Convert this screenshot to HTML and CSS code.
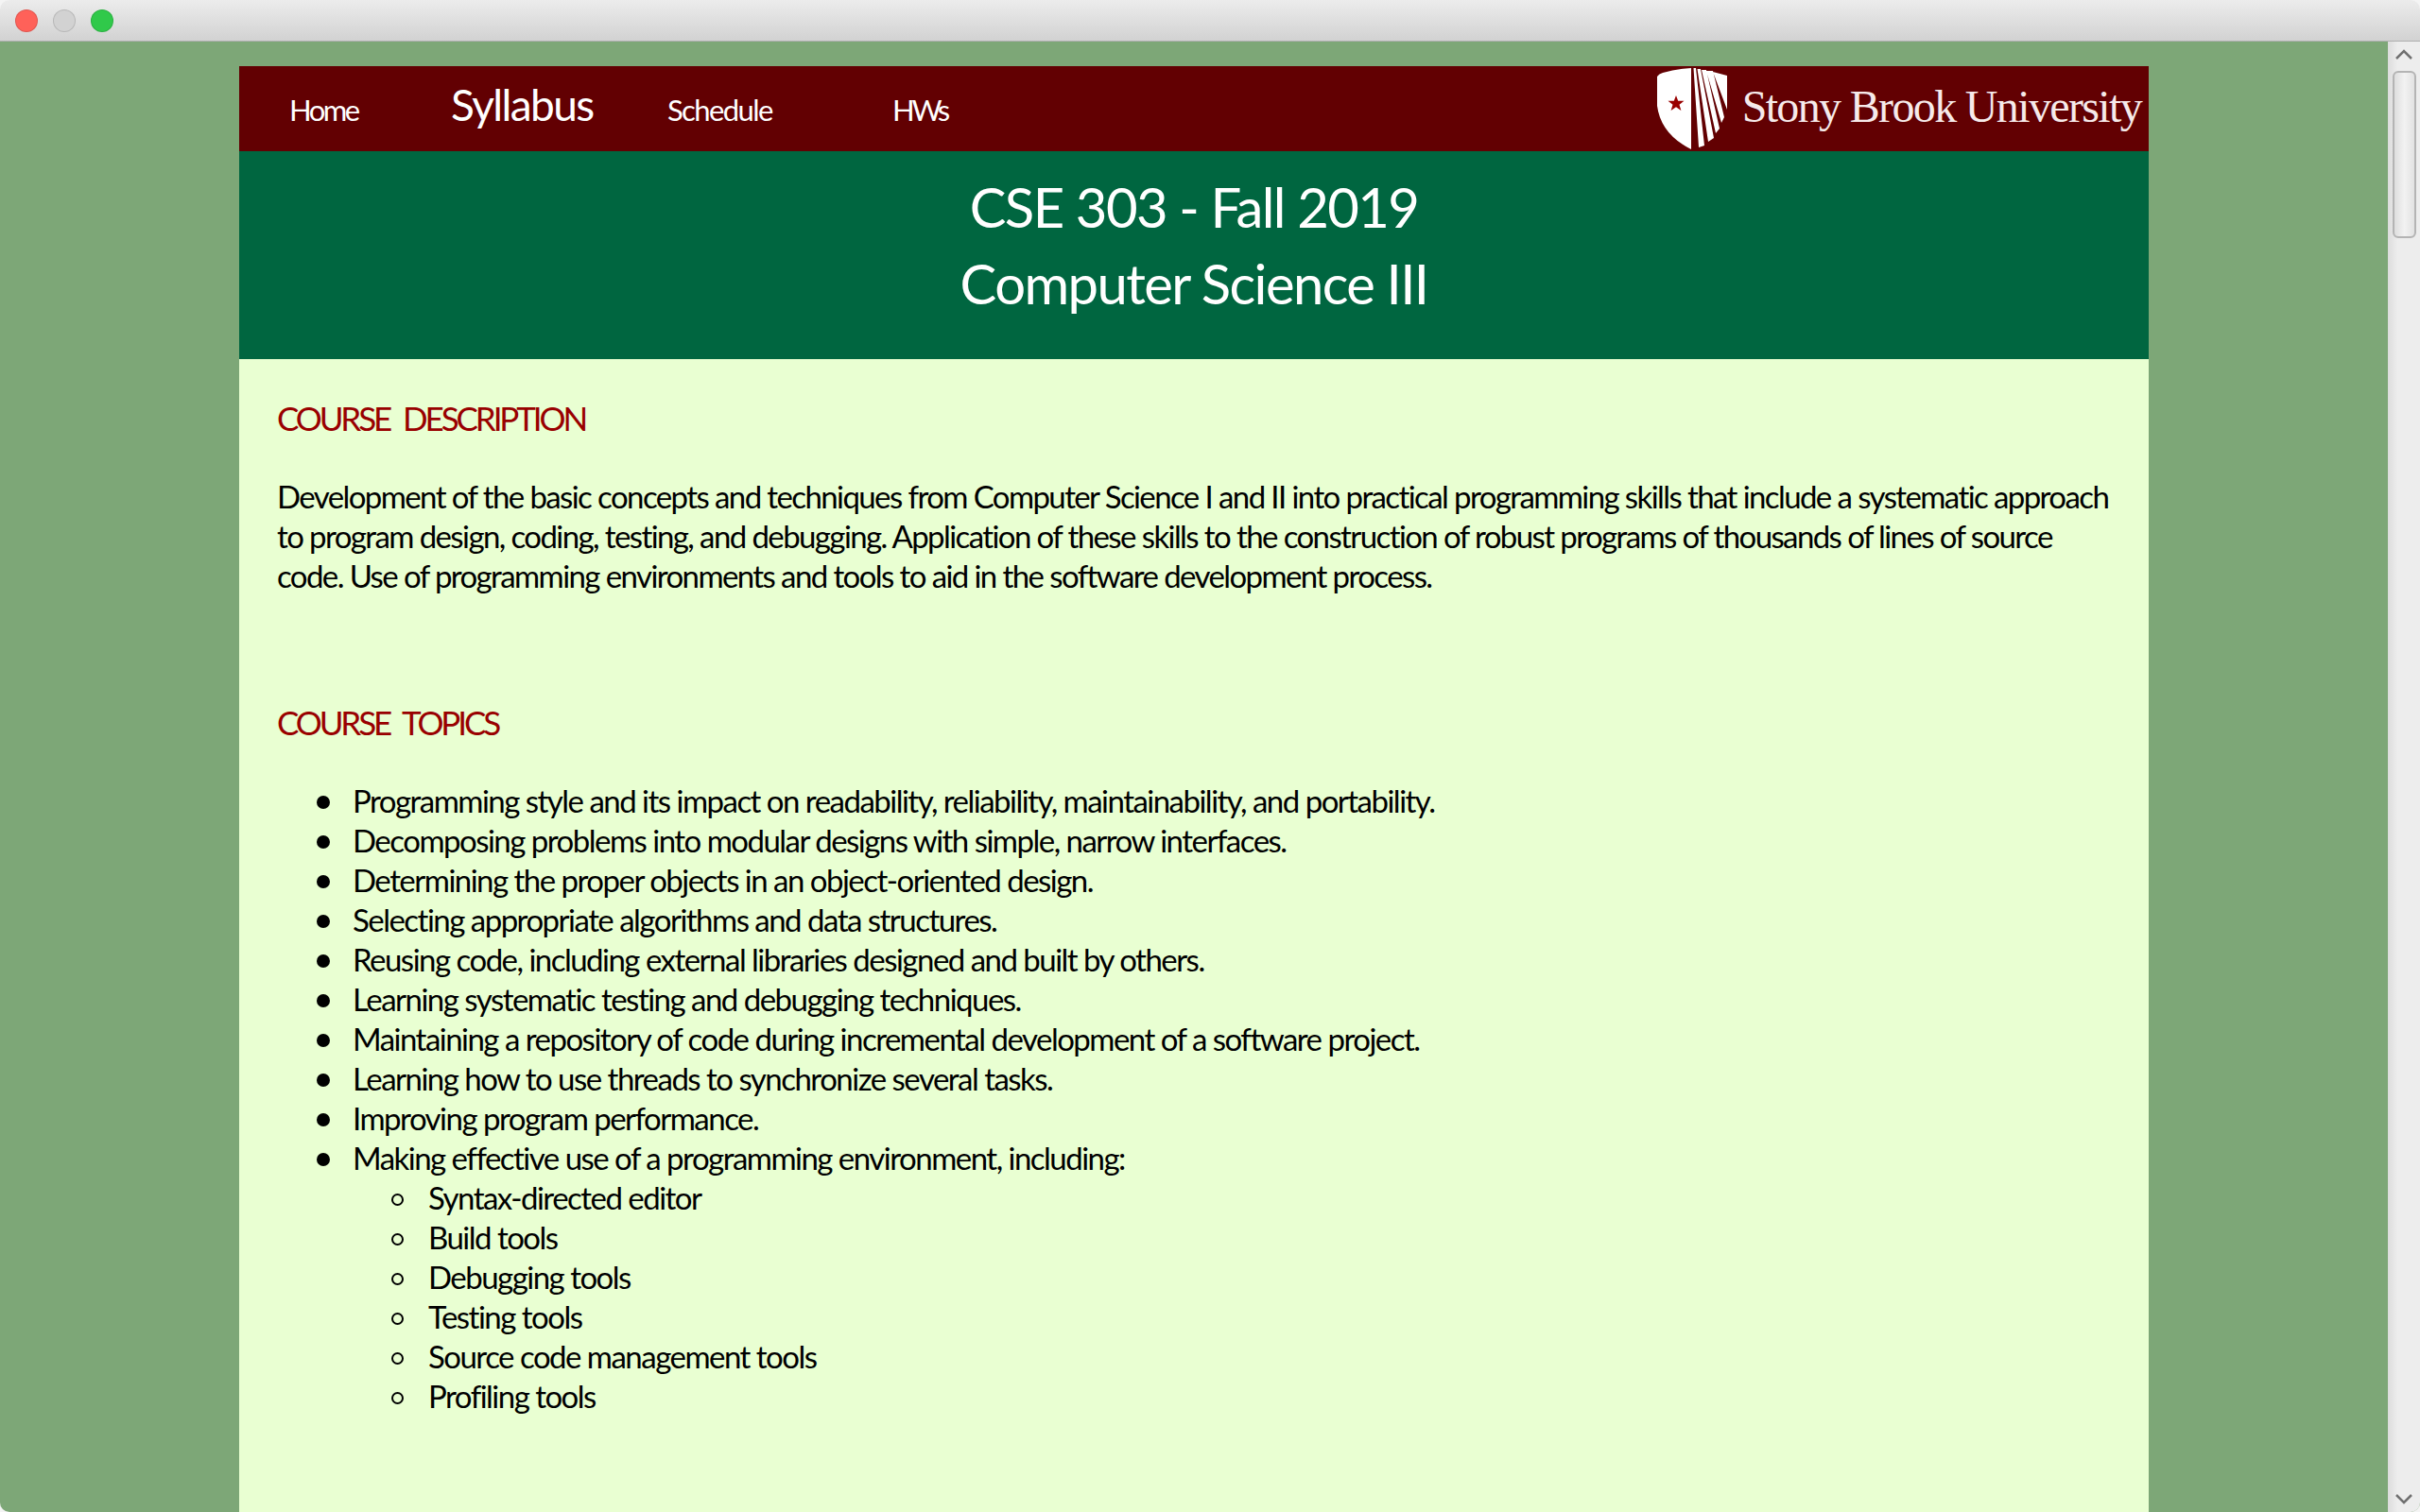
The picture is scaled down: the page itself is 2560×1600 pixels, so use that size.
FILE: index.html
```html
<!DOCTYPE html>
<html>
<head>
    <title>CSE 303 - Syllabus</title>
    <link rel="stylesheet" href="styles.css">
</head>
<body>
    <div class="titlebar">
        <span class="light red"></span>
        <span class="light grey"></span>
        <span class="light green"></span>
    </div>
    <div class="viewport">
        <div class="page">
            <div class="navbar">
                <a class="nav-link nav-home">Home</a>
                <a class="nav-link nav-syllabus">Syllabus</a>
                <a class="nav-link nav-schedule">Schedule</a>
                <a class="nav-link nav-hws">HWs</a>
                <div class="logo">
                    <svg class="shield" width="75" height="87" viewBox="0 0 75 87">
                        <path d="M0 9 Q2 6 6 5 Q20 1 36 0 L36 86 Q4 70 0 40 Z" fill="#fff"/>
                        <path d="M38.500 0 L41 0 L50 82 L44 84 Z M42.500 1 L46 1 L60 74 L54 78 Z M47 2 L52 2 L66 64 L62 69 Z M52 3 L59 3 L71 52 L68 58 Z M59 4 L74 8 L74 44 Z" fill="#fff"/>
                        <path d="M20 29 l2.200 5.800 6.300 0 -5 3.900 1.900 6.300 -5.400 -3.800 -5.400 3.800 1.900 -6.300 -5 -3.900 6.300 0 Z" fill="#990000"/>
                    </svg>
                    <span class="logo-text">Stony Brook University</span>
                </div>
            </div>
            <div class="banner">
                <div>CSE 303 - Fall 2019</div>
                <div>Computer Science III</div>
            </div>
            <div class="content">
                <h3>COURSE DESCRIPTION</h3>
                <p>Development of the basic concepts and techniques from Computer Science I and II into practical programming skills that include a systematic approach to program design, coding, testing, and debugging. Application of these skills to the construction of robust programs of thousands of lines of source code. Use of programming environments and tools to aid in the software development process.</p>
                <h3 class="topics">COURSE TOPICS</h3>
                <ul>
                    <li>Programming style and its impact on readability, reliability, maintainability, and portability.</li>
                    <li>Decomposing problems into modular designs with simple, narrow interfaces.</li>
                    <li>Determining the proper objects in an object-oriented design.</li>
                    <li>Selecting appropriate algorithms and data structures.</li>
                    <li>Reusing code, including external libraries designed and built by others.</li>
                    <li>Learning systematic testing and debugging techniques.</li>
                    <li>Maintaining a repository of code during incremental development of a software project.</li>
                    <li>Learning how to use threads to synchronize several tasks.</li>
                    <li>Improving program performance.</li>
                    <li>Making effective use of a programming environment, including:
                        <ul>
                            <li>Syntax-directed editor</li>
                            <li>Build tools</li>
                            <li>Debugging tools</li>
                            <li>Testing tools</li>
                            <li>Source code management tools</li>
                            <li>Profiling tools</li>
                        </ul>
                    </li>
                </ul>
            </div>
        </div>
        <div class="scrollbar">
            <svg class="arrow" width="18" height="12" viewBox="0 0 18 12"><path d="M1 10 L9 2 L17 10" fill="none" stroke="#707070" stroke-width="2.500"/></svg>
            <div class="track"><div class="thumb"></div></div>
            <svg class="arrow" width="18" height="12" viewBox="0 0 18 12"><path d="M1 2 L9 10 L17 2" fill="none" stroke="#707070" stroke-width="2.500"/></svg>
        </div>
    </div>
</body>
</html>
```

FILE: styles.css
```css
html, body { margin: 0; height: 100%; overflow: hidden; }
body { font-family: "Lato", "Open Sans", sans-serif; display: flex; flex-direction: column; background: #f4f4f4; }
.titlebar { height: 43px; flex: none; display: flex; align-items: center; gap: 16px; padding-left: 16px; background: linear-gradient(#ececec, #d2d2d2); border-bottom: 1px solid #b0b0b0; border-radius: 10px 10px 0 0; }
.light { width: 24px; height: 24px; border-radius: 50%; box-sizing: border-box; border: 1px solid rgba(0, 0, 0, 0.12); }
.red { background: #ff6159; }
.grey { background: #d2d2d2; }
.green { background: #30c94a; }
.viewport { flex: 1; display: flex; min-height: 0; background: #7da777; border-radius: 0 0 10px 10px; overflow: hidden; }
.page { width: 2020px; margin: 26px 0 0 253px; flex: none; background: #e9ffd2; }
.navbar { height: 90px; box-sizing: border-box; padding-top: 13px; background: #620002; display: flex; align-items: baseline; color: #fff; position: relative; }
.nav-link { font-size: 31px; letter-spacing: -1.6px; }
.nav-home { margin-left: 53px; width: 171px; letter-spacing: -2.5px; }
.nav-syllabus { font-size: 46px; width: 229px; }
.nav-schedule { width: 238px; }
.nav-hws { letter-spacing: -3.2px; }
.logo { position: absolute; right: 8px; top: 2px; display: flex; align-items: center; gap: 15px; }
.shield { display: block; }
.logo-text { font-family: "Liberation Serif", serif; font-size: 48px; letter-spacing: -1.65px; color: #f6eaea; margin-bottom: 6px; }
.banner { height: 220px; background: #006640; color: #fff; text-align: center; font-size: 58px; letter-spacing: -1.6px; line-height: 81px; padding-top: 18px; box-sizing: border-box; }
.content { padding: 0 28px 0 40px; color: #000; font-size: 33px; letter-spacing: -1.52px; line-height: 42px; }
h3 { font-size: 35px; letter-spacing: -3.1px; word-spacing: 8px; font-weight: normal; color: #990000; margin: 38px 0 38px; line-height: 48px; }
p { margin: 0; letter-spacing: -1.6px; }
.topics { margin-top: 110px; }
ul { margin: 0; padding-left: 80px; list-style: none; }
li { position: relative; }
li::before { content: ""; position: absolute; left: -38px; top: 16px; width: 14px; height: 14px; border-radius: 50%; background: #000; }
li li::before { left: -39px; top: 17px; width: 13px; height: 13px; box-sizing: border-box; background: none; border: 2px solid #000; }
.scrollbar { width: 34px; margin-left: auto; background: linear-gradient(90deg, #dcdcdc, #ededed 30%, #ededed); display: flex; flex-direction: column; align-items: center; }
.arrow { flex: none; margin: 8px 0; }
.track { flex: 1; width: 100%; }
.thumb { width: 25px; height: 177px; margin: 3px auto 0; box-sizing: border-box; background: linear-gradient(90deg, #dedede, #f2f2f2 50%, #e2e2e2); border: 2px solid #b4b4b4; border-radius: 6px; }
```
